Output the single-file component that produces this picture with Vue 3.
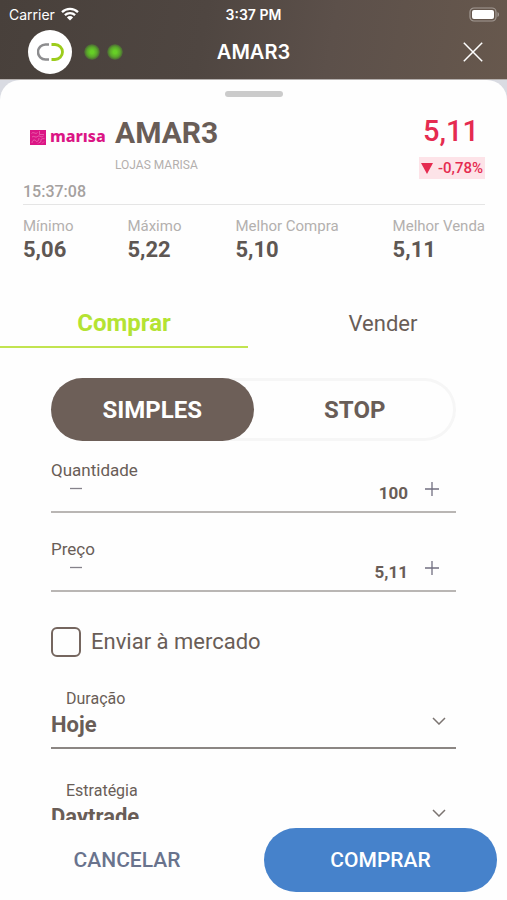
<script setup>
import { ref } from 'vue'

const quote = {
  ticker: 'AMAR3',
  company: 'LOJAS MARISA',
  time: '15:37:08',
  price: '5,11',
  change: '-0,78%',
}

const stats = [
  { label: 'Mínimo', value: '5,06' },
  { label: 'Máximo', value: '5,22' },
  { label: 'Melhor Compra', value: '5,10' },
  { label: 'Melhor Venda', value: '5,11' },
]

const sides = ['Comprar', 'Vender']
const side = ref('Comprar')

const kinds = ['SIMPLES', 'STOP']
const kind = ref('SIMPLES')

const steppers = ref([
  { id: 'quantidade', label: 'Quantidade', value: '100', step: 100, digits: 0 },
  { id: 'preco', label: 'Preço', value: '5,11', step: 0.01, digits: 2 },
])

const atMarket = ref(false)

const selects = ref([
  { id: 'duracao', label: 'Duração', value: 'Hoje', options: ['Hoje'] },
  { id: 'estrategia', label: 'Estratégia', value: 'Daytrade', options: ['Daytrade'] },
])

function bump(field, direction) {
  const current = parseFloat(field.value.replace(',', '.')) || 0
  const next = Math.max(0, current + direction * field.step)
  field.value = next.toFixed(field.digits).replace('.', ',')
}
</script>

<template>
  <div class="screen">
    <header class="top">
      <div class="status">
        <div class="carrier">
          <span>Carrier</span>
          <svg width="18" height="14" viewBox="0 0 18 14" aria-hidden="true">
            <g fill="none" stroke="#fff" stroke-width="2.3">
              <path d="M1 5.1a11.6 11.6 0 0 1 16 0" />
              <path d="M3.9 8.2a7.4 7.4 0 0 1 10.2 0" />
            </g>
            <path d="M9 13.6 5.9 10.4a4.4 4.4 0 0 1 6.2 0z" fill="#fff" />
          </svg>
        </div>
        <span class="clock">3:37 PM</span>
        <svg class="battery" width="31" height="15" viewBox="0 0 31 15" aria-hidden="true">
          <rect x="1" y="1" width="26" height="13" rx="4" fill="none" stroke="#a39a94" stroke-width="1.2" />
          <rect x="3" y="3" width="22" height="9" rx="2" fill="#fff" />
          <path d="M28.5 5v5c2-.8 2-4.200 0-5z" fill="#a39a94" />
        </svg>
      </div>
      <div class="nav">
        <div class="brand">
          <span class="logo">
            <svg width="27" height="18" viewBox="0 0 27 18" aria-hidden="true">
              <path d="M12 1.500H8.500a7.300 7.300 0 0 0 0 15H12" fill="none" stroke="#8d8d8f" stroke-width="2.500" />
              <path d="M14.500 1.500H18a7.300 7.300 0 0 1 0 15h-3.500" fill="none" stroke="#9ccc1c" stroke-width="2.800" />
            </svg>
          </span>
          <span class="led"></span>
          <span class="led"></span>
        </div>
        <h1 class="title">{{ quote.ticker }}</h1>
        <button class="close" type="button" aria-label="Fechar">
          <svg width="20" height="20" viewBox="0 0 20 20" aria-hidden="true">
            <path d="M.8.8l18.400 18.400M19.200.8.8 19.200" stroke="#fff" stroke-width="1.500" fill="none" />
          </svg>
        </button>
      </div>
    </header>

    <div class="backdrop">
      <main class="sheet">
        <div class="handle"></div>

        <section class="quote">
          <div class="issuer">
            <svg width="16" height="15" viewBox="0 0 16 15" aria-hidden="true">
              <rect width="16" height="15" fill="#db1685" />
              <g fill="none" stroke="#f3a0cd" stroke-width=".5">
                <path d="M1.500 3.500c2-2.500 4 1.500 6-1M9.500 1v3.500h4.500M2 7c2-2 3.500 1.500 5.500-.5s3 2 6-.5" />
                <path d="M2 13c0-3 3-4 4-2s3-1 3-3M8 13.500c1-2 3 0 3-3s3-1 3.500-2.500M12 13.500l2-2" />
              </g>
            </svg>
            <span class="marisa">marısa</span>
          </div>
          <div class="names">
            <h2 class="ticker">{{ quote.ticker }}</h2>
            <span class="company">{{ quote.company }}</span>
          </div>
          <div class="pricing">
            <span class="price">{{ quote.price }}</span>
            <span class="change">
              <svg width="12" height="11" viewBox="0 0 12 11" aria-hidden="true">
                <path d="M0 0h12L6 11z" fill="#e52b50" />
              </svg>
              {{ quote.change }}
            </span>
          </div>
        </section>
        <time class="time">{{ quote.time }}</time>

        <dl class="stats">
          <div v-for="stat in stats" :key="stat.label">
            <dt>{{ stat.label }}</dt>
            <dd>{{ stat.value }}</dd>
          </div>
        </dl>

        <div class="tabs" role="tablist">
          <button
            v-for="name in sides"
            :key="name"
            type="button"
            role="tab"
            class="tab"
            :class="{ active: side === name }"
            :aria-selected="side === name"
            @click="side = name"
          >{{ name }}</button>
        </div>

        <form class="form" @submit.prevent>
          <div class="segment">
            <button
              v-for="name in kinds"
              :key="name"
              type="button"
              class="option"
              :class="{ active: kind === name }"
              :aria-pressed="kind === name"
              @click="kind = name"
            >{{ name }}</button>
          </div>

          <div v-for="field in steppers" :key="field.id" class="stepper">
            <label :for="field.id">{{ field.label }}</label>
            <div class="stepper-row">
              <button type="button" aria-label="Diminuir" @click="bump(field, -1)">
                <svg width="14" height="14" viewBox="0 0 14 14" aria-hidden="true">
                  <path d="M1 6.500h12" stroke="#85828a" stroke-width="1.300" />
                </svg>
              </button>
              <input :id="field.id" v-model="field.value" type="text" inputmode="decimal" />
              <button type="button" aria-label="Aumentar" @click="bump(field, 1)">
                <svg width="14" height="14" viewBox="0 0 14 14" aria-hidden="true">
                  <path d="M0 7h14M7 0v14" stroke="#716f80" stroke-width="1.300" />
                </svg>
              </button>
            </div>
          </div>

          <label class="check">
            <input v-model="atMarket" type="checkbox" />
            <span>Enviar à mercado</span>
          </label>

          <div v-for="field in selects" :key="field.id" class="picker">
            <label :for="field.id">{{ field.label }}</label>
            <div class="picker-row">
              <select :id="field.id" v-model="field.value">
                <option v-for="item in field.options" :key="item">{{ item }}</option>
              </select>
              <svg class="chevron" width="14" height="8" viewBox="0 0 14 8" aria-hidden="true">
                <path d="M1 1l6 6 6-6" fill="none" stroke="#7b7471" stroke-width="1.500" />
              </svg>
            </div>
          </div>
        </form>
      </main>
    </div>

    <footer class="actions">
      <button class="cancel" type="button">CANCELAR</button>
      <button class="buy" type="button">COMPRAR</button>
    </footer>
  </div>
</template>

<style>
body {
  background: #fefefe;
}
</style>

<style scoped>
.screen {
  display: flex;
  flex-direction: column;
  height: 100vh;
  overflow: hidden;
  font-family: Roboto, "Liberation Sans", sans-serif;
  color: #695d57;
}

.screen * {
  box-sizing: border-box;
}

button,
input,
select {
  margin: 0;
  padding: 0;
  border: 0;
  background: none;
  color: inherit;
  font: inherit;
}

svg {
  display: block;
}

.top {
  flex: none;
  padding-bottom: 3px;
  background: linear-gradient(100deg, #48403b, #4f4641 40%, #5c504a 65%, #67584d);
  color: #fff;
  font-family: Inter, Roboto, sans-serif;
}

.status,
.nav {
  display: grid;
  grid-template-columns: 1fr auto 1fr;
  align-items: center;
}

.status {
  height: 28px;
  padding: 0 7px;
  font-size: 14px;
}

.carrier {
  display: flex;
  align-items: center;
  gap: 6px;
  padding-left: 2px;
}

.clock {
  font-weight: 600;
}

.battery {
  justify-self: end;
}

.nav {
  height: 48px;
  padding: 0 24px;
}

.brand {
  display: flex;
  align-items: center;
  gap: 7px;
  padding-left: 4px;
}

.logo {
  display: grid;
  place-items: center;
  width: 44px;
  height: 44px;
  margin-right: 5px;
  border-radius: 50%;
  background: #fff;
}

.led {
  width: 16px;
  height: 16px;
  border-radius: 50%;
  background: radial-gradient(circle, #66cf26 15%, #5aa52b 45%, #4e6c35 65%, #4a443d00 72%);
}

.title {
  margin: 0;
  font-size: 20px;
  font-weight: 600;
}

.close {
  justify-self: end;
}

.backdrop {
  flex: 1;
  min-height: 0;
  background: #d9dbe2;
  border-top: 1px solid #b5b0ae;
}

.sheet {
  height: 100%;
  overflow-y: auto;
  scrollbar-width: none;
  border-radius: 20px 20px 0 0;
  background: #fefefe;
}

.handle {
  width: 58px;
  height: 6px;
  margin: 11px auto 0;
  border-radius: 3px;
  background: #cbcbcb;
}

.quote {
  display: flex;
  align-items: flex-start;
  margin: 16px 22px 0 30px;
}

.issuer {
  display: flex;
  align-items: center;
  gap: 4px;
  width: 85px;
  height: 48px;
}

.marisa {
  height: 24px;
  color: #db1685;
  font-family: "Noto Sans", "Open Sans", sans-serif;
  font-size: 16px;
  font-weight: 800;
  line-height: 22px;
}

.names {
  flex: 1;
}

.ticker {
  margin: 0;
  font-size: 30px;
  font-weight: 700;
  line-height: 40px;
}

.company {
  display: block;
  margin-top: 4px;
  color: #b3afad;
  font-size: 12px;
  line-height: 16px;
}

.pricing {
  display: flex;
  flex-direction: column;
  align-items: flex-end;
  color: #e52b50;
}

.price {
  padding-right: 6px;
  font-size: 29px;
  font-weight: 500;
  line-height: 36px;
}

.change {
  display: flex;
  align-items: center;
  gap: 5px;
  margin-top: 8px;
  padding: 0 2px;
  background: #fde3e8;
  font-size: 15px;
  font-weight: 500;
  line-height: 22px;
}

.time {
  display: block;
  margin: 1px 22px 0 23px;
  padding-bottom: 1px;
  border-bottom: 1px solid #e5e5e5;
  color: #a5a19f;
  font-size: 16px;
  font-weight: 500;
  line-height: 23px;
}

.stats {
  display: flex;
  justify-content: space-between;
  margin: 11px 22px 0 23px;
}

.stats dt {
  color: #b3b0ae;
  font-size: 15px;
  line-height: 20px;
}

.stats dd {
  margin: 0;
  color: #5e5753;
  font-size: 22px;
  font-weight: 700;
  line-height: 28px;
}

.tabs {
  display: grid;
  grid-template-columns: 1fr 1fr;
  gap: 11px;
  margin-top: 34px;
}

.tab {
  height: 50px;
  padding-top: 2px;
  border-bottom: 2px solid transparent;
  font-size: 22px;
}

.tab.active {
  border-color: #c2e450;
  color: #b4e333;
  font-size: 24px;
  font-weight: 700;
}

.form {
  padding: 30px 51px 24px;
}

.segment {
  display: grid;
  grid-template-columns: 1fr 1fr;
  border-radius: 32px;
  box-shadow: inset 0 0 0 3px #f6f6f6;
}

.option {
  height: 63px;
  border-radius: 32px;
  font-size: 24px;
  font-weight: 700;
}

.option.active {
  background: #6d5f58;
  color: #fff;
}

.stepper {
  margin-top: 26px;
  border-bottom: 2px solid #b9b6b4;
}

.segment + .stepper {
  margin-top: 19px;
}

.stepper label {
  display: block;
  font-size: 17px;
  line-height: 20px;
}

.stepper-row {
  display: flex;
  align-items: flex-start;
  height: 31px;
  padding: 2px 17px 0 18px;
}

.stepper-row input {
  flex: 1;
  min-width: 0;
  margin-right: 17px;
  font-size: 17px;
  font-weight: 700;
  line-height: 22px;
  text-align: right;
}

.check {
  display: flex;
  align-items: center;
  gap: 10px;
  margin-top: 35px;
  font-size: 22px;
  line-height: 30px;
}

.check input {
  appearance: none;
  width: 30px;
  height: 30px;
  border: 2px solid #75665f;
  border-radius: 6px;
}

.check input:checked {
  background: #6d5f58;
}

.picker {
  margin-top: 32px;
  border-bottom: 2px solid #8b8683;
}

.picker label {
  display: block;
  padding-left: 15px;
  font-size: 16px;
  line-height: 20px;
}

.picker-row {
  position: relative;
  height: 38px;
}

.picker select {
  appearance: none;
  display: block;
  width: 100%;
  height: 31px;
  font-size: 22px;
  font-weight: 700;
}

.chevron {
  position: absolute;
  top: 8px;
  right: 10px;
  pointer-events: none;
}

.actions {
  flex: none;
  display: grid;
  grid-template-columns: 1fr 233px;
  align-items: center;
  gap: 10px;
  height: 80px;
  padding: 0 10px 0 0;
  background: #fefefe;
  font-size: 21px;
  font-weight: 500;
}

.cancel {
  height: 64px;
  color: #69738d;
}

.buy {
  height: 64px;
  border-radius: 32px;
  background: #4682cb;
  color: #fff;
}
</style>
